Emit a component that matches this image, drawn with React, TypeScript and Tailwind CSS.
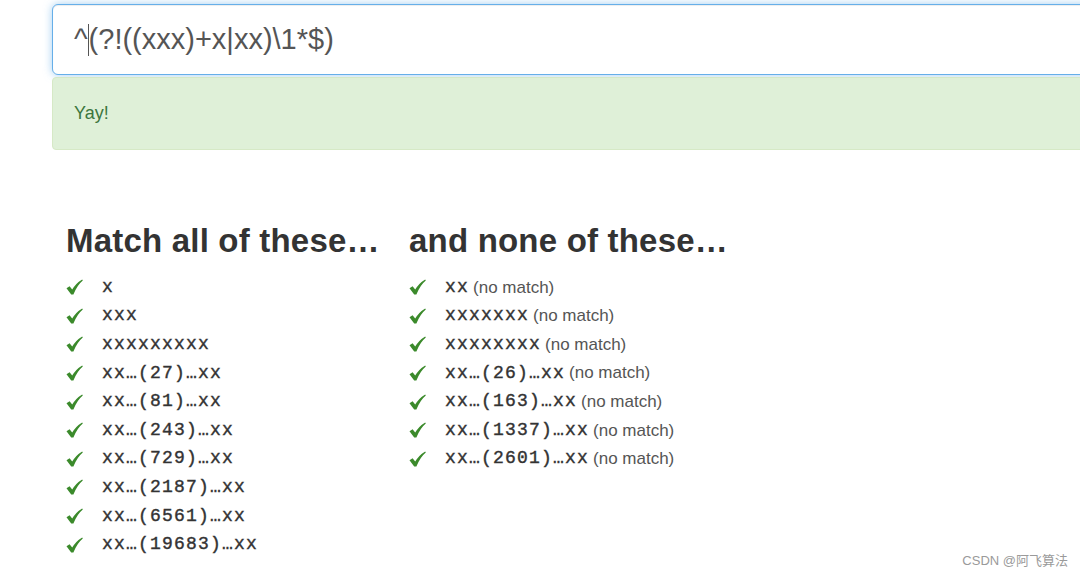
const matches = ['x', 'xxx', 'xxxxxxxxx', 'xx…(27)…xx', 'xx…(81)…xx', 'xx…(243)…xx', 'xx…(729)…xx', 'xx…(2187)…xx', 'xx…(6561)…xx', 'xx…(19683)…xx']
const nonMatches = ['xx', 'xxxxxxx', 'xxxxxxxx', 'xx…(26)…xx', 'xx…(163)…xx', 'xx…(1337)…xx', 'xx…(2601)…xx']

const sans = { fontFamily: '"Liberation Sans", Arial, sans-serif' }

function Check() {
  return (
    <span className="w-[36px] shrink-0 flex items-center">
      <svg width="17" height="16" viewBox="0 0 17 16" className="text-[#3b8a2b]">
        <path d="M0.5 9.2 L3.6 7.3 L6.2 10.6 Q9.8 4.2 16.2 0.4 L16.8 1.4 Q11.2 6 7.4 15.4 L5.2 15.6 Z" fill="currentColor" />
      </svg>
    </span>
  )
}

function Row({ text, miss }: { text: string; miss?: boolean }) {
  return (
    <li className="flex items-center h-[28.6px]">
      <Check />
      <span className="text-[18px] tracking-[1.2px] text-[#333] font-['Liberation_Mono',monospace] [-webkit-text-stroke:0.4px_#333]">{text}</span>
      {miss && <span className="ml-[4px] text-[17px] text-[#555]">(no match)</span>}
    </li>
  )
}

export default function App() {
  return (
    <div className="relative w-[1080px] h-[574px] overflow-hidden bg-white" style={sans}>
      <div className="pl-[52px] pt-[4px]">
        {/* regex input */}
        <div className="w-[1060px] h-[71px] flex items-center pl-[21px] bg-white border border-[#66afe9] rounded-[6px] shadow-[0_0_8px_rgba(102,175,233,0.6),inset_0_1px_1px_rgba(0,0,0,0.075)]">
          <span className="text-[29px] text-[#555] leading-none flex items-center">
            ^<span className="inline-block w-[1px] h-[32px] bg-[#555]" />(?!((xxx)+x|xx)\1*$)
          </span>
        </div>

        {/* status */}
        <div className="mt-[2px] w-[1060px] h-[73px] flex items-center pl-[21px] bg-[#dff0d8] border border-[#d6e9c6] rounded-[4px] text-[18px] text-[#3c763d]">
          Yay!
        </div>
      </div>

      <div className="flex pl-[66px] mt-[73px]">
        <div className="w-[343px]">
          <h2 className="text-[33px] leading-[36px] font-bold text-[#333] tracking-[0.2px]">Match all of these…</h2>
          <ul className="mt-[14px]">
            {matches.map(m => <Row key={m} text={m} />)}
          </ul>
        </div>
        <div>
          <h2 className="text-[33px] leading-[36px] font-bold text-[#333] tracking-[0.2px]">and none of these…</h2>
          <ul className="mt-[14px]">
            {nonMatches.map(m => <Row key={m} text={m} miss />)}
          </ul>
        </div>
      </div>

      <div className="absolute right-[12px] bottom-[4px] text-[13px] text-[#9a9a9a]" style={{ fontFamily: '"Liberation Sans", "Noto Sans CJK SC", sans-serif' }}>
        CSDN @阿飞算法
      </div>
    </div>
  )
}
